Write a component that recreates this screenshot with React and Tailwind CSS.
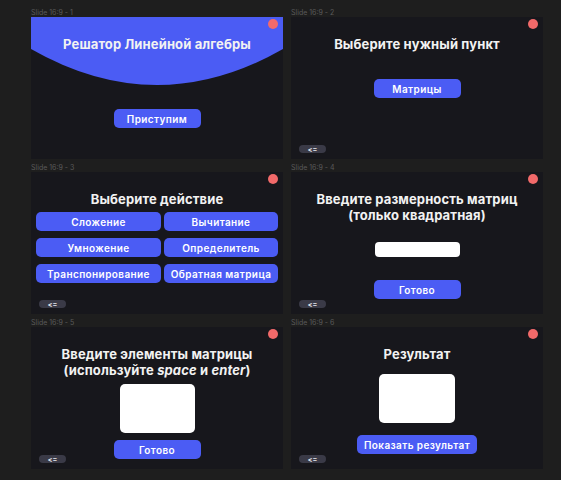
import React from 'react';

const font = { fontFamily: 'Inter, "Noto Sans", sans-serif' };

function Dot() {
  return <div className="absolute top-[2px] right-[5px] w-[10px] h-[10px] rounded-full bg-[#f26a6a]" />;
}

function Back() {
  return (
    <div className="absolute left-[8px] bottom-[6px] w-[27px] h-[8px] rounded-full bg-[#3a3a47] flex items-center justify-center text-[7px] leading-none font-bold text-[#e8e8f0]">
      &lt;=
    </div>
  );
}

function Btn({ children, className = 'w-[87px]' }) {
  return (
    <div className={`${className} h-[19px] rounded-[5px] bg-[#4b5cf4] flex items-center justify-center text-[10px] font-semibold tracking-[0.04em] text-white leading-none`}>
      {children}
    </div>
  );
}

function Frame({ label, children }) {
  return (
    <div className="flex flex-col">
      <div className="h-[9px] text-[7px] leading-[9px] text-[#5a5a5a]">{label}</div>
      <div className="relative w-[252px] h-[142px] bg-[#17171c] overflow-hidden">{children}</div>
    </div>
  );
}

const title = 'text-[13px] leading-[16px] font-bold tracking-[0.01em] text-[#f2f2f2] text-center';

export default function App() {
  return (
    <div className="w-[561px] h-[480px] bg-[#1e1e1e] pt-[8px] pl-[31px]" style={font}>
      <div className="grid grid-cols-[252px_252px] gap-x-[8px] gap-y-[4px]">
        <Frame label="Slide 16:9 - 1">
          {/* curved blue header */}
          <svg className="absolute left-0 top-0" width="252" height="70" viewBox="0 0 252 70">
            <path d="M0 0 H252 V32 Q126 104 0 32 Z" fill="#4b5cf4" />
          </svg>
          <Dot />
          <div className="relative flex flex-col items-center pt-[19px]">
            <div className={title}>Решатор Линейной алгебры</div>
            <div className="mt-[57px]">
              <Btn>Приступим</Btn>
            </div>
          </div>
        </Frame>

        <Frame label="Slide 16:9 - 2">
          <Dot />
          <div className="flex flex-col items-center pt-[19px]">
            <div className={title}>Выберите нужный пункт</div>
            <div className="mt-[27px]">
              <Btn>Матрицы</Btn>
            </div>
          </div>
          <Back />
        </Frame>

        <Frame label="Slide 16:9 - 3">
          <Dot />
          <div className="flex flex-col items-center pt-[19px]">
            <div className={title}>Выберите действие</div>
            <div className="mt-[5px] w-full px-[5px] grid grid-cols-[125px_114px] gap-x-[3px] gap-y-[7px]">
              <Btn className="w-full">Сложение</Btn>
              <Btn className="w-full">Вычитание</Btn>
              <Btn className="w-full">Умножение</Btn>
              <Btn className="w-full">Определитель</Btn>
              <Btn className="w-full">Транспонирование</Btn>
              <Btn className="w-full">Обратная матрица</Btn>
            </div>
          </div>
          <Back />
        </Frame>

        <Frame label="Slide 16:9 - 4">
          <Dot />
          <div className="flex flex-col items-center pt-[19px]">
            <div className={title}>
              Введите размерность матриц
              <br />
              (только квадратная)
            </div>
            <div className="mt-[19px] w-[85px] h-[15px] rounded-[4px] bg-white" />
            <div className="mt-[23px]">
              <Btn>Готово</Btn>
            </div>
          </div>
          <Back />
        </Frame>

        <Frame label="Slide 16:9 - 5">
          <Dot />
          <div className="flex flex-col items-center pt-[19px]">
            <div className={title}>
              Введите элементы матрицы
              <br />
              (используйте <i>space</i> и <i>enter</i>)
            </div>
            <div className="mt-[6px] w-[75px] h-[49px] rounded-[5px] bg-white" />
            <div className="mt-[7px]">
              <Btn>Готово</Btn>
            </div>
          </div>
          <Back />
        </Frame>

        <Frame label="Slide 16:9 - 6">
          <Dot />
          <div className="flex flex-col items-center pt-[19px]">
            <div className={title}>Результат</div>
            <div className="mt-[12px] w-[76px] h-[49px] rounded-[5px] bg-white" />
            <div className="mt-[12px]">
              <Btn className="w-[120px]">Показать результат</Btn>
            </div>
          </div>
          <Back />
        </Frame>
      </div>
    </div>
  );
}
